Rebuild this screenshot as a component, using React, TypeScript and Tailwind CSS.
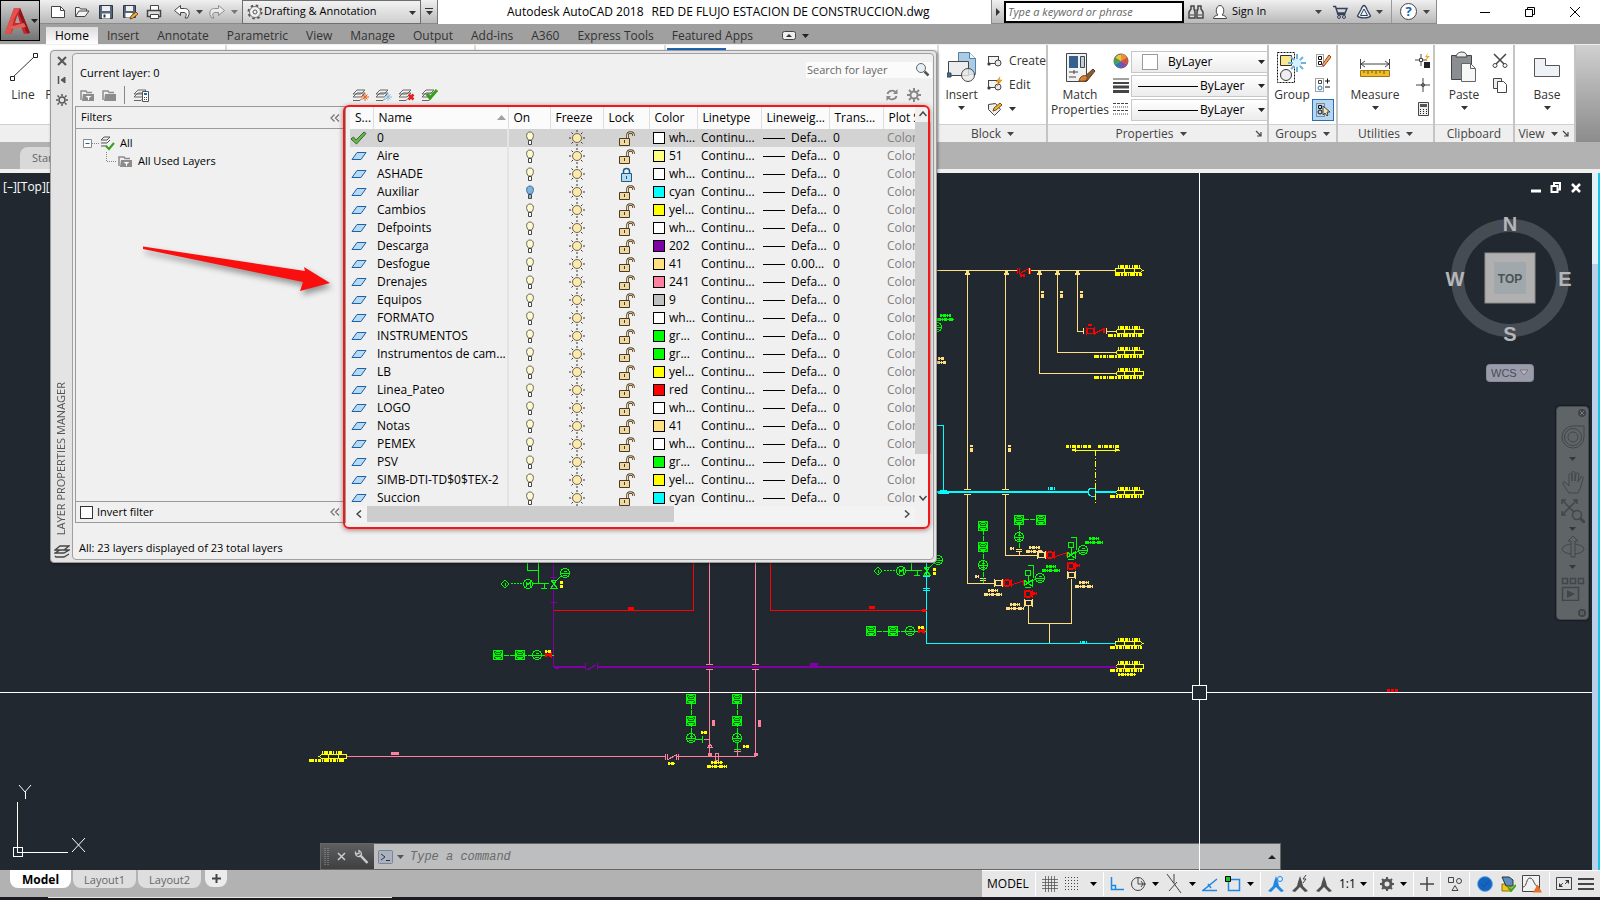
import React from 'react';

type Kids = { children?: React.ReactNode };

function Ico({ w = 16, h = 16, className = '', children }: Kids & { w?: number; h?: number; className?: string }) {
  return (
    <svg width={w} height={h} viewBox={`0 0 ${w} ${h}`} className={`shrink-0 ${className}`} fill="none" stroke="#454545" aria-hidden="true">
      {children}
    </svg>
  );
}

function Caret({ className = '' }: { className?: string }) {
  return (
    <svg width="7" height="4" viewBox="0 0 7 4" className={`shrink-0 ${className}`} aria-hidden="true">
      <path d="M0 0h7L3.500 4z" fill="currentColor" />
    </svg>
  );
}

/* ---------- title bar ---------- */

function QuickAccess() {
  return (
    <div className="flex h-6 items-center border-b border-[#8a8a8a] bg-linear-to-b from-[#f0f0f0] to-[#b9b9b9] pl-2.5">
      <div className="flex items-center gap-2">
        <button aria-label="New"><Ico><path d="M1.500 2.500h9l4 4v7h-13z" fill="#fff" /><path d="M10.500 2.500v4h4" /></Ico></button>
        <button aria-label="Open"><Ico><path d="M1.500 12.500v-9h4l1 1.500h6v2M1.500 12.500l3.500-5.500h10l-4 5.500z" fill="#f4f4f4" /></Ico></button>
        <button aria-label="Save"><Ico><path d="M1.500 1.500h13v13h-13z" fill="#56657c" stroke="#2e3848" /><path d="M4 2h8v5H4z" fill="#eee" stroke="none" /><path d="M4 9.500h8v5H4z" fill="#fff" stroke="none" /><path d="M5.500 10.500h2v3h-2z" fill="#333" stroke="none" /></Ico></button>
        <button aria-label="Save As"><Ico><path d="M1.500 1.500h12v12h-12z" fill="#56657c" stroke="#2e3848" /><path d="M4 2h7v5H4z" fill="#eee" stroke="none" /><path d="M3.500 9h7v4.500h-7z" fill="#fff" stroke="none" /><path d="M8 15l1-3 5-4 2 2-5 4z" fill="#f0b63c" stroke="#7a4a15" /></Ico></button>
        <button aria-label="Plot"><Ico><path d="M4.500 6V1.500h8V6" fill="#fff" /><path d="M1.500 6.500h13v6h-13z" fill="#ddd" strokeWidth="1.500" /><path d="M4.500 10.500h8v4h-8z" fill="#fff" /></Ico></button>
        <button aria-label="Undo" className="ml-1"><Ico><path d="M.500 6.500l6-5v3h4c3.500 0 5 2 4.500 6l-1.500 3.500h-2.500c2-3 1.500-5.500-1-5.500H6.500v3z" fill="#fff" /></Ico></button>
      </div>
      <Caret className="ml-1.5 text-[#444]" />
      <button aria-label="Redo" className="ml-1.5"><Ico className="opacity-50"><path d="M15.500 6.500l-6-5v3h-4c-3.500 0-5 2-4.500 6l1.500 3.500H5c-2-3-1.500-5.500 1-5.500h3.500v3z" fill="#fff" /></Ico></button>
      <Caret className="ml-1.5 text-[#777]" />
      <label className="relative ml-1 flex h-6 w-[179px] items-center border border-[#6f6f6f] bg-linear-to-b from-[#f2f2f2] to-[#cfcfcf]">
        <GearIcon className="absolute left-1 top-[3px]" />
        <select aria-label="Workspace" className="h-full w-full appearance-none bg-transparent pl-[21px] text-[11px] outline-none"><option>Drafting &amp; Annotation</option></select>
        <Caret className="absolute right-1 top-2.5 text-[#333]" />
      </label>
      <button aria-label="Customize toolbar" className="flex h-6 w-[17px] flex-col items-center justify-center gap-0.5 border-r border-[#777]">
        <span className="h-px w-2 bg-[#333]" /><Caret className="text-[#333]" />
      </button>
    </div>
  );
}

function GearIcon({ className = '' }: { className?: string }) {
  return (
    <Ico className={className}>
      <g stroke="#555">
        <circle cx="8" cy="8" r="6.500" strokeDasharray="2.500 2.600" strokeWidth="2" />
        <circle cx="8" cy="8" r="5.500" fill="#f2f2f2" stroke="#777" />
        <circle cx="8" cy="8" r="2" fill="#f2f2f2" />
      </g>
    </Ico>
  );
}

function TitleBar() {
  return (
    <div className="flex h-6 items-start bg-white">
      <QuickAccess />
      <h1 className="flex h-6 flex-1 items-center gap-2 overflow-hidden whitespace-nowrap pl-[69px] text-xs">
        <span>Autodesk AutoCAD 2018</span><span>RED DE FLUJO ESTACION DE CONSTRUCCION.dwg</span>
      </h1>
      <div className="flex h-6 w-[446px] items-center border border-t-0 border-[#8a8a8a] bg-linear-to-b from-[#f0f0f0] to-[#b9b9b9]">
        <button aria-label="Toggle search" className="flex w-3 justify-center"><Ico w={5} h={8}><path d="M0 0l4 4-4 4z" fill="#333" stroke="none" /></Ico></button>
        <input aria-label="Search" placeholder="Type a keyword or phrase" className="h-[22px] w-[180px] border-2 border-black bg-white px-0.5 text-[11px] italic outline-none placeholder:text-[#666]" />
        <button aria-label="Find" className="ml-1"><Ico><path d="M3 2h3v3l1 3v6H1V8l2-3zM10 2h3v3l2 3v6H9V8l1-3z" fill="#ddd" strokeWidth="1.500" /><path d="M6 6h4M2 11h4M10 11h4" /></Ico></button>
        <button className="ml-2 flex items-center gap-1 whitespace-nowrap text-[11px]"><Ico><path d="M1.500 14.500c0-2 2-3 4.500-3.500-3-2-2-9.500 2-9.500s5 7.500 2 9.500c2.500.5 4.500 1.500 4.500 3.500z" fill="#fff" /></Ico>Sign In</button>
        <Caret className="ml-auto text-[#444]" />
        <button aria-label="App Store" className="ml-2.5"><Ico><path d="M1 2.500h2.500L6 10.500h7.500M4 4.500h11l-2 4.500H5.500" stroke="#34435c" strokeWidth="1.500" /><circle cx="7" cy="13" r="1.500" stroke="#34435c" /><circle cx="12" cy="13" r="1.500" stroke="#34435c" /></Ico></button>
        <button aria-label="Stay connected" className="ml-2"><Ico><path d="M8 1.500c-1.500 0-2 1.500-3 4L1.500 12c2 2.500 11 2.500 13 0L11 5.500c-1-2.500-1.500-4-3-4z" stroke="#34435c" strokeWidth="1.300" fill="#eef1f6" /><path d="M4.500 11.500L8 5l3.500 6.500z" stroke="#34435c" /></Ico></button>
        <Caret className="ml-1 text-[#444]" />
        <span className="ml-2 h-full w-px bg-[#999]" />
        <button aria-label="Help" className="ml-2 flex size-[17px] items-center justify-center rounded-full border border-[#444] bg-white text-[13px] font-bold leading-none text-[#1660b0]">?</button>
        <Caret className="mx-1.5 text-[#444]" />
      </div>
      <div className="flex h-6 w-[163px] items-center justify-end gap-[29px] pr-[17px]">
        <button aria-label="Minimize"><Ico><path d="M3 8.500h10" stroke="#000" /></Ico></button>
        <button aria-label="Restore"><Ico><path d="M3.500 5.500h7v7h-7zM5.500 5.500v-2h7v7h-2" stroke="#000" /></Ico></button>
        <button aria-label="Close"><Ico><path d="M3 3l10 10M13 3L3 13" stroke="#000" /></Ico></button>
      </div>
    </div>
  );
}

const ribbonTabs = ['Home', 'Insert', 'Annotate', 'Parametric', 'View', 'Manage', 'Output', 'Add-ins', 'A360', 'Express Tools', 'Featured Apps'];

function Header() {
  return (
    <header className="flex bg-[#a0a0a0]">
      <button aria-label="Application menu" className="flex h-[41px] w-10 items-center border border-black bg-linear-to-b from-[#d0d0d0] to-[#747474] pl-1">
        <Ico w={26} h={30}>
          <path d="M0 27L9 2h6l10 25-6 1-3-7H9l-3 7z" fill="#c5282d" stroke="none" />
          <path d="M10 17l2.500-8 2.500 8z" fill="#a5a5a5" stroke="none" />
          <path d="M9 2h6l-6 11-3 15-6-1z" fill="#e2524c" stroke="none" />
          <path d="M15 2l10 25-3 .5-8-19z" fill="#8f171c" stroke="none" />
          <path d="M4 21l15-4 2 4-13 2z" fill="#e4615a" stroke="none" />
        </Ico>
        <Caret className="text-[#222]" />
      </button>
      <div className="min-w-0 flex-1">
        <TitleBar />
        <nav className="flex h-5 items-end whitespace-nowrap pl-[6px] text-xs text-[#333]">
          {ribbonTabs.map((t, i) => (
            <button key={t} className={i === 0 ? 'h-[17px] bg-linear-to-b from-[#dcdcdc] to-white px-[9px] leading-4 text-black' : 'h-[17px] px-[9px] leading-4'}>{t}</button>
          ))}
          <button aria-label="Ribbon display" className="ml-5 flex h-[17px] items-center gap-1.5"><Ico w={14} h={9}><rect x=".5" y=".5" width="13" height="8" rx="2" fill="#eee" /><path d="M4 6l3-3 3 3z" fill="#333" stroke="none" /></Ico><Caret className="text-[#222]" /></button>
        </nav>
      </div>
    </header>
  );
}

/* ---------- ribbon ---------- */

function Panel({ title, w, caret = true, launcher = false, children }: Kids & { title: string; w: string; caret?: boolean; launcher?: boolean }) {
  return (
    <section className={`flex shrink-0 flex-col border-r-2 border-[#c4c4c4] bg-white ${w}`}>
      <div className="flex flex-1 items-start pl-[5px] pt-1.5">{children}</div>
      <div className="flex h-[18px] items-center border-t border-[#d0d0d0] bg-[#efefef] text-xs text-[#444]">
        <div className="flex flex-1 items-center justify-center gap-1.5"><h2>{title}</h2>{caret && <Caret />}</div>
        {launcher && <Ico w={9} h={9} className="mr-1"><path d="M2 2l5 5M7 3v4H3" strokeWidth="1.200" /></Ico>}
      </div>
    </section>
  );
}

function Big({ label, icon, caret = true, w = 'w-12' }: { label: string; icon: React.ReactNode; caret?: boolean; w?: string }) {
  return (
    <button className={`flex flex-col items-center text-xs leading-[15px] text-[#333] ${w}`}>
      <span className="flex h-9 items-start">{icon}</span>
      <span>{label}</span>
      {caret && <Caret className="mt-1" />}
    </button>
  );
}

const pill = (
  <g><rect x="1.500" y="3.500" width="10" height="7" fill="#f5f5f5" /><circle cx="11" cy="10" r="3" fill="#e8e8e8" /><path d="M1 10h2v2H1z" fill="#333" /></g>
);

function PropSelect({ label, kind }: { label: string; kind: 'swatch' | 'line' }) {
  return (
    <span className="relative flex h-[22px] w-[137px] items-center border border-[#c8c8c8] bg-linear-to-b from-white to-[#ececec]">
      {kind === 'swatch' ? <span className="absolute left-2.5 top-[2px] h-4 w-4 border border-[#999] bg-white" /> : <span className="absolute left-1.5 top-2.5 h-px w-[60px] bg-black" />}
      <select aria-label={label} className={`h-full w-full appearance-none bg-transparent text-xs outline-none ${kind === 'swatch' ? 'pl-9' : 'pl-[68px]'}`}><option>ByLayer</option></select>
      <Caret className="absolute right-0.5 top-2 text-[#222]" />
    </span>
  );
}

function Ribbon() {
  return (
    <div className="flex h-[98px] border-t border-[#eee] bg-white">
      <section className="flex w-[227px] flex-col border-r-2 border-[#ddd]">
        <div className="flex flex-1 pl-[7px] pt-1.5">
          <Big label="Line" caret={false} w="w-8" icon={<Ico w={30} h={32}><path d="M4 27L27 5" stroke="#333" /><path d="M2.500 25.500h4v4h-4zM25.500 2.500h4v4h-4z" fill="#fff" stroke="#222" /></Ico>} />
          <Big label="Polyline" w="w-14" icon={<Ico w={30} h={32}><path d="M4 27V12l22-6" /></Ico>} />
        </div>
        <div className="h-[18px] border-t border-[#d0d0d0] bg-[#efefef]" />
      </section>
      <div className="w-[249px] border-r-2 border-[#ddd]" />
      <div className="w-[190px] border-r-2 border-[#ddd]" />
      <div className="flex-1 border-r-2 border-[#ddd] pl-[1px] pt-[3px]"><div className="h-0.5 w-[59px] bg-[#2065b5]" /></div>
      <Panel title="Block" w="w-[109px]">
        <Big label="Insert" w="w-10" icon={<Ico w={30} h={32}><path d="M11.500 1.500h11l6 6v16h-17z" fill="#a9cbe6" stroke="#5b7f9e" /><path d="M22.500 1.500v6h6" fill="#eef6fc" stroke="#5b7f9e" /><path d="M1.500 10.500h20v14h-20z" fill="#ececec" /><circle cx="21" cy="24" r="6.500" fill="#e8e8e8" fillOpacity=".8" /><path d="M0 22h4v4H0z" fill="#2f6ea8" /></Ico>} />
        <div className="flex flex-col gap-2 pl-2 pt-0.5 text-xs leading-4 text-[#333]">
          <button className="flex items-center gap-1.5"><Ico>{pill}</Ico>Create</button>
          <button className="flex items-center gap-1.5"><Ico>{pill}<path d="M13 0L9 5h3l-2 4 5-6h-3z" fill="#f5a623" stroke="#c07a10" strokeWidth=".5" /></Ico>Edit</button>
          <button aria-label="Attributes" className="flex items-center gap-1.5"><Ico><path d="M1.500 3.500l7-1 5 6-6 6-6-6z" fill="#eee" /><path d="M6 10l1-3 6-5 2 2-6 5z" fill="#f0b63c" stroke="#7a4a15" /></Ico><Caret /></button>
        </div>
      </Panel>
      <Panel title="Properties" w="w-[221px]" launcher>
        <button className="flex w-[54px] flex-col items-center text-xs leading-[15px] text-[#333]">
          <span className="flex h-9"><Ico w={32} h={33}><path d="M2.500 2.500h20v28h-20z" fill="#f2f2f2" /><path d="M5 5h9v12H5z" fill="#33608c" stroke="none" /><path d="M16.500 5.500h4v11h-4z" fill="#b9d2e6" /><path d="M5 21h9M5 26h7M10 19v4" /><path d="M19 27l10-9 2 2-8 10z" fill="#8a5a30" stroke="#5c3a1c" /><path d="M15 30c1-5 4-6 8-5 1 4-2 6-8 5z" fill="#d38137" stroke="#7b4515" /></Ico></span>
          <span>Match Properties</span>
        </button>
        <div className="flex flex-col gap-2 pl-1.5 pt-0.5">
          <Ico><circle cx="8" cy="8" r="7" fill="#f3c53a" stroke="#555" /><path d="M8 8V1a7 7 0 0 1 6 3.500z" fill="#e98f3b" stroke="none" /><path d="M8 8l6-3.500a7 7 0 0 1 0 7z" fill="#d84d3f" stroke="none" /><path d="M8 8l6 3.500A7 7 0 0 1 8 15z" fill="#8b49a8" stroke="none" /><path d="M8 8v7a7 7 0 0 1-6-3.500z" fill="#3474bd" stroke="none" /><path d="M8 8l-6 3.500a7 7 0 0 1 0-7z" fill="#46a153" stroke="none" /></Ico>
          <Ico><path d="M0 2h16" strokeWidth="1" /><path d="M0 6h16" strokeWidth="2" /><path d="M0 10h16M0 14.500h16" strokeWidth="3" /></Ico>
          <Ico><path d="M0 2.500h16M0 9.500h16" strokeDasharray="3 1" /><path d="M0 6h16M0 13h16" strokeDasharray="1 1" /></Ico>
        </div>
        <div className="flex flex-col gap-0.5 pl-0.5"><PropSelect label="Object color" kind="swatch" /><PropSelect label="Lineweight" kind="line" /><PropSelect label="Linetype" kind="line" /></div>
      </Panel>
      <Panel title="Groups" w="w-[69px]">
        <Big label="Group" caret={false} w="w-9" icon={<Ico w={32} h={34}><path d="M1.500 1.500h17v30h-17z" strokeDasharray="2 1" stroke="#111" /><path d="M4.500 4.500h11v10h-11z" fill="#f7e78e" stroke="#333" /><circle cx="10" cy="24" r="5.500" fill="#eee" stroke="#333" /><path d="M21 3v18M12 12h18M15 6l12 12M27 6L15 18" stroke="#6bb5e0" strokeWidth="2" /><circle cx="21" cy="12" r="4" fill="#d9f1ff" stroke="none" /></Ico>} />
        <div className="flex flex-col items-center gap-1 pl-0.5">
          <button aria-label="Ungroup" className="p-0.5"><Ico><path d="M1.500 1.500h7v12h-7z" strokeDasharray="1 1" /><path d="M3.500 3.500h3v3h-3zM3.500 8.500h3v3h-3z" stroke="#111" /><path d="M7 12l7-10 2 2-7 9z" fill="#e8b14a" stroke="#a33" /></Ico></button>
          <button aria-label="Group edit" className="p-0.5"><Ico><path d="M.500 1.500h8v13h-8z" strokeDasharray="1 1" /><path d="M3.500 3.500h3v3h-3z" /><circle cx="5" cy="11" r="2" stroke="#2475c0" /><path d="M10 4h5M12.500 1.500v5M10 10h5" stroke="#111" /></Ico></button>
          <button aria-label="Group selection" className="border border-[#2c6fb0] bg-[#b5d5f0] p-0.5"><Ico><path d="M1.500 1.500h8v13h-8z" strokeDasharray="1 1" /><path d="M3.500 3.500h3v3h-3z" stroke="#111" /><circle cx="5" cy="10" r="2" stroke="#111" /><path d="M8 4v9l2-2 2 3 1-1-1-3h3z" fill="#f5e5b0" stroke="#444" /></Ico></button>
        </div>
      </Panel>
      <Panel title="Utilities" w="w-[97px]">
        <Big label="Measure" w="w-16" icon={<Ico w={32} h={32}><path d="M1.500 8v10M30.500 8v10M2 13h28M6 10l-4 3 4 3M26 10l4 3-4 3" /><path d="M1.500 19.500h29v6h-29z" fill="#f0bc28" stroke="#9c7614" /><path d="M5 20v2M9 20v3M13 20v2M17 20v3M21 20v2M25 20v3" stroke="#6c500a" /></Ico>} />
        <div className="flex flex-col gap-2 pl-2 pt-0.5">
          <button aria-label="Quick select"><Ico><path d="M6 1v12M0 7h12" /><path d="M4.500 5.500h3v3h-3z" fill="#fff" /><path d="M13 0L10 4h2l-2 4 5-5h-3z" fill="#f5a623" stroke="none" /><path d="M9 9h6v6H9z" fill="#222" stroke="none" /></Ico></button>
          <button aria-label="ID point"><Ico><path d="M8 1v14M1 8h14" /><circle cx="8" cy="8" r="1.500" fill="#777" /></Ico></button>
          <button aria-label="Calculator"><Ico><path d="M3.500 1.500h10v13h-10z" fill="#eee" /><path d="M5 3h7v3H5z" fill="#555" stroke="none" /><path d="M5 8.500h7M5 10.500h7M5 12.500h7" strokeDasharray="1 2" stroke="#222" /></Ico></button>
        </div>
      </Panel>
      <Panel title="Clipboard" w="w-20" caret={false}>
        <Big label="Paste" w="w-12" icon={<Ico w={28} h={33}><path d="M1.500 4.500h20v24h-20z" fill="#8a8e93" stroke="#444" /><path d="M6 6c0-3 3-5 6-5s5 2 5 5z" fill="#eee" /><path d="M11.500 12.500h9l5 5v13h-14z" fill="#f7f7f7" stroke="#666" /><path d="M20.500 12.500v5h5" stroke="#666" /></Ico>} />
        <div className="flex flex-col gap-2 pl-1 pt-0.5">
          <button aria-label="Cut"><Ico><path d="M2 1l10 10M14 1L4 11" strokeWidth="1.500" /><circle cx="3" cy="12.500" r="2" /><circle cx="13" cy="12.500" r="2" /></Ico></button>
          <button aria-label="Copy"><Ico><path d="M1.500 1.500h8v10h-8z" fill="#eee" /><path d="M5.500 4.500h6l3 3v8h-9z" fill="#fff" /></Ico></button>
        </div>
      </Panel>
      <Panel title="View" w="w-[61px]" launcher>
        <Big label="Base" w="w-[54px]" icon={<Ico w={28} h={32}><path d="M1.500 7.500h11v7h14v11h-25z" fill="#eef1f5" stroke="#555" /></Ico>} />
      </Panel>
      <div className="w-6 bg-linear-to-b from-[#d0d0d0] to-[#8c8c8c]" />
    </div>
  );
}

/* ---------- layer palette ---------- */

type Layer = [string, string, string, string?];
const W = '#ffffff';
const layers: Layer[] = [
  ['0', W, 'wh...'], ['Aire', '#ffff7f', '51'], ['ASHADE', W, 'wh...'], ['Auxiliar', '#00ffff', 'cyan'], ['Cambios', '#ffff00', 'yel...'],
  ['Defpoints', W, 'wh...'], ['Descarga', '#7f00a5', '202'], ['Desfogue', '#ffdf7f', '41', '0.00...'], ['Drenajes', '#ff7f9f', '241'], ['Equipos', '#c0c0c0', '9'],
  ['FORMATO', W, 'wh...'], ['INSTRUMENTOS', '#00ff00', 'gr...'], ['Instrumentos de cam...', '#00ff00', 'gr...'], ['LB', '#ffff00', 'yel...'], ['Linea_Pateo', '#ff0000', 'red'],
  ['LOGO', W, 'wh...'], ['Notas', '#ffdf7f', '41'], ['PEMEX', W, 'wh...'], ['PSV', '#00ff00', 'gr...'], ['SIMB-DTI-TD$0$TEX-2', '#ffff00', 'yel...'], ['Succion', '#00ffff', 'cyan'],
];

const Sheet = () => <Ico w={17} h={10}><path d="M2 8.500L7 1.500h9l-5 7z" fill="#b5daf2" stroke="#1d5fa8" /></Ico>;
const Check = () => <Ico w={17} h={14}><path d="M1 8l2.500-2L6 9l8-8 2 1.500L6.500 13z" fill="#6fb253" stroke="#2b6e22" /></Ico>;
const Bulb = ({ off }: { off: boolean }) => (
  <Ico w={10} h={15} className="mx-auto"><path d="M3.500 9C1 7 .5 1 5 1s4 6 1.500 8z" fill={off ? '#7db3dd' : '#fffbd0'} stroke={off ? '#3c6f9c' : '#6b6650'} /><path d="M3.500 9.500h3v4h-3z" fill={off ? '#9db8cc' : '#fff'} stroke="#444" /></Ico>
);
const Sun = () => <Ico w={16} h={16} className="mx-auto"><path d="M8 0v2M8 14v2M0 8h2M14 8h2M2.500 2.500l1.500 1.500M12 12l1.500 1.500M13.500 2.500L12 4M4 12l-1.500 1.500" stroke="#333" /><circle cx="8" cy="8" r="4.500" fill="#fde9ae" stroke="#6d6248" /></Ico>;
const Lock = ({ closed }: { closed: boolean }) => closed ? (
  <Ico w={18} h={15} className="mx-auto"><path d="M6.500 6V4c0-3.500 6-3.500 6 0v2" stroke="#1f5b85" strokeWidth="1.500" /><path d="M4.500 6.500h10v8h-10z" fill="#b6dcf4" stroke="#1f5b85" /><path d="M9.500 9v3" stroke="#1f5b85" /></Ico>
) : (
  <Ico w={18} h={15} className="mx-auto"><path d="M10.500 7V4c0-3.500 6-3.500 6 0v1" stroke="#4b3a22" strokeWidth="2.500" /><path d="M10.500 7V4c0-3.500 6-3.500 6 0v1" stroke="#f2dcae" /><path d="M2.500 7.500h10v7h-10z" fill="#f0d8a4" stroke="#4b3a22" /><path d="M7.500 9v3" stroke="#4b3a22" /></Ico>
);

const heads = ['S...', 'Name', 'On', 'Freeze', 'Lock', 'Color', 'Linetype', 'Lineweig...', 'Trans...', 'Plot S...'];

function LayerTable() {
  return (
    <div className="flex h-[416px] w-[581px] flex-col">
      <div className="flex min-h-0 flex-1">
        <div className="min-w-0 flex-1 overflow-hidden">
          <table className="w-[597px] table-fixed border-collapse whitespace-nowrap text-left text-xs">
            <colgroup>
              <col className="w-[23px]" /><col className="w-[135px]" /><col className="w-[42px]" /><col className="w-[53px]" /><col className="w-[46px]" /><col className="w-12" /><col className="w-16" /><col className="w-[68px]" /><col className="w-[54px]" /><col className="w-16" />
            </colgroup>
            <thead>
              <tr className="h-[23px] bg-[#fbfbfb]">
                {heads.map((h, i) => (
                  <th key={h} className="overflow-hidden border-r border-[#dedede] p-0 pl-[5px] font-normal">
                    {i === 1 ? <span className="flex items-center justify-between pr-0.5">{h}<Ico w={9} h={5}><path d="M0 5l4.500-5L9 5z" fill="#a0a0a0" stroke="none" /></Ico></span> : h}
                  </th>
                ))}
              </tr>
            </thead>
            <tbody>
              {layers.map(([name, color, label, lw], i) => (
                <tr key={name} className={i === 0 ? 'h-[18px] bg-[#d3d3d3] leading-[18px]' : 'h-[18px] leading-[18px]'}>
                  <td className="p-0">{i === 0 ? <Check /> : <Sheet />}</td>
                  <td className="overflow-hidden border-r-2 border-[#e4e4e4] p-0 pl-1">{name}</td>
                  <td className="p-0"><Bulb off={name === 'Auxiliar'} /></td>
                  <td className="p-0"><Sun /></td>
                  <td className="p-0"><Lock closed={name === 'ASHADE'} /></td>
                  <td className="overflow-hidden p-0 pl-1"><span className="flex items-center gap-1"><span className="size-3 shrink-0 border border-black" style={{ backgroundColor: color }} />{label}</span></td>
                  <td className="overflow-hidden p-0 pl-1">Continu...</td>
                  <td className="overflow-hidden p-0 pl-0.5"><span className="flex items-center gap-1.5"><span className="h-px w-[22px] bg-black" />{lw ?? 'Defa...'}</span></td>
                  <td className="p-0 pl-1">0</td>
                  <td className="overflow-hidden p-0 pl-1 text-[#808080]">Color</td>
                </tr>
              ))}
            </tbody>
          </table>
        </div>
        <div className="flex w-4 flex-col items-center justify-between bg-[#f0f0f0]">
          <div className="flex h-4 items-center"><Ico w={8} h={6}><path d="M.500 5L4 1l3.500 4" strokeWidth="1.500" /></Ico></div>
          <div className="h-[332px] w-4 bg-[#cdcdcd]" />
          <div className="mt-auto flex h-4 items-center"><Ico w={8} h={6}><path d="M.500 1L4 5l3.500-4" strokeWidth="1.500" /></Ico></div>
        </div>
      </div>
      <div className="flex h-4 w-[565px] items-center bg-[#f3f3f3]">
        <span className="flex w-[17px] justify-center"><Ico w={6} h={8}><path d="M5 .500L1 4l4 3.500" strokeWidth="1.500" /></Ico></span>
        <span className="h-4 w-[307px] bg-[#cdcdcd]" />
        <span className="ml-auto flex w-[17px] justify-center"><Ico w={6} h={8}><path d="M1 .500L5 4 1 7.500" strokeWidth="1.500" /></Ico></span>
      </div>
    </div>
  );
}

const Stack = ({ extra }: { extra?: React.ReactNode }) => (
  <Ico w={18} h={14}><path d="M1 9l4-4h8l-4 4zM1 12.500h7l2-2M1 6l4-4h8l-4 4z" stroke="#666" />{extra}</Ico>
);
const Folder = ({ t = false }: { t?: boolean }) => (
  <Ico w={14} h={13}><path d="M1 11V2h5l1 1.500h5" stroke="#8c8c8c" strokeWidth="1.500" /><path d="M3 5h11v7H2z" fill="#8c8c8c" stroke="none" />{t && <path d="M5.500 7h6L9 9v2H8V9z" fill="#fff" stroke="none" />}</Ico>
);
const Collapse = () => <button aria-label="Collapse"><Ico w={10} h={8}><path d="M4.500.5L1 4l3.500 3.500M9 .5L5.500 4 9 7.500" stroke="#777" strokeWidth="1.300" /></Ico></button>;

function LayerPalette() {
  return (
    <aside className="absolute left-[50px] top-[50px] flex h-[513px] w-[887px] rounded border border-[#9a9a9a] bg-[#e4e4e4] text-[11px] text-black shadow-[1px_1px_3px_rgba(0,0,0,0.4)]">
      <div className="flex w-[21px] flex-col items-center gap-[9px] pb-1 pt-[5px]">
        <button aria-label="Close palette"><Ico w={10} h={10}><path d="M1 1l8 8M9 1L1 9" strokeWidth="2" stroke="#555" /></Ico></button>
        <button aria-label="Auto-hide"><Ico w={10} h={10}><path d="M1.500 1v8" stroke="#555" strokeWidth="1.500" /><path d="M8 2L4 5l4 3z" fill="#555" stroke="#555" /></Ico></button>
        <button aria-label="Palette options"><Ico w={12} h={12}><circle cx="6" cy="6" r="3" strokeWidth="1.500" stroke="#555" /><path d="M6 0v2M6 10v2M0 6h2M10 6h2M1.500 1.500L3 3M9 9l1.500 1.500M10.500 1.500L9 3M3 9l-1.500 1.500" strokeWidth="1.500" stroke="#555" /></Ico></button>
        <h2 className="mt-auto rotate-180 whitespace-nowrap text-[11px] text-[#555] [writing-mode:vertical-rl]">LAYER PROPERTIES MANAGER</h2>
        <Ico w={16} h={14}><path d="M1 9l5-3h9l-5 3zM1 12l1 1h8l5-3M1 6l5-4h9l-5 4z" stroke="#444" strokeWidth="1.300" /></Ico>
      </div>
      <div className="mb-0.5 mr-0.5 mt-0.5 flex min-w-0 flex-1 flex-col rounded border border-[#a0a0a0] bg-[#f0f0f0]">
        <div className="flex h-[30px] items-end justify-between pl-[7px] pr-px">
          <p className="pb-[3px] leading-4">Current layer: 0</p>
          <label className="mb-1.5 flex h-4 w-[126px] items-center bg-[#fbfbfb]">
            <input aria-label="Search for layer" placeholder="Search for layer" className="w-[108px] bg-transparent pl-px outline-none placeholder:text-[#666]" />
            <Ico><circle cx="7" cy="6" r="4.500" fill="#e4eff7" stroke="#666" /><path d="M10.500 9.500l4 4" strokeWidth="2.500" stroke="#555" /></Ico>
          </label>
        </div>
        <div className="flex h-[22px] items-center pl-[7px] pr-3">
          <div className="flex w-[272px] items-center gap-2">
            <button aria-label="New property filter"><Folder t /></button>
            <button aria-label="New group filter"><Folder /></button>
            <span className="h-[18px] w-px bg-[#888]" />
            <button aria-label="Layer states manager"><Stack extra={<g><path d="M9.500 3.500h6v10h-6z" fill="#fff" stroke="#555" /><path d="M11 5h3v2h-3z" fill="#1d68b8" stroke="none" /><path d="M11 9.500h3M11 11.500h3" strokeDasharray="1" /></g>} /></button>
          </div>
          <div className="flex flex-1 items-center gap-[5px]">
            <button aria-label="New layer"><Stack extra={<path d="M13 5v8M9 9h8M10.500 6.500l5 5M15.500 6.500l-5 5" stroke="#e8601c" />} /></button>
            <button aria-label="New frozen layer"><Stack extra={<path d="M13 5v8M9 9h8M10.500 6.500l5 5M15.500 6.500l-5 5" stroke="#85bfe2" />} /></button>
            <button aria-label="Delete layer"><Stack extra={<path d="M10.500 6.500l5 5M15.500 6.500l-5 5" stroke="#e0201c" strokeWidth="2.500" />} /></button>
            <button aria-label="Set current"><Stack extra={<path d="M6 6l3 4 7-8" stroke="#36a018" strokeWidth="3" />} /></button>
          </div>
          <button aria-label="Refresh" className="mr-[9px]"><Ico w={12} h={12}><path d="M1.500 5C2 2 7 0 10 3.500M10.500 7C10 10 5 12 2 8.500" stroke="#888" strokeWidth="1.800" /><path d="M11.500 0v5H7zM.500 12V7H5z" fill="#888" stroke="none" /></Ico></button>
          <button aria-label="Settings"><Ico w={14} h={14}><circle cx="7" cy="7" r="3.500" stroke="#888" strokeWidth="2" /><path d="M7 0v3M7 11v3M0 7h3M11 7h3M2 2l2 2M10 10l2 2M12 2l-2 2M4 10l-2 2" stroke="#888" strokeWidth="2" /></Ico></button>
        </div>
        <div className="flex h-[417px] pl-0.5">
          <div className="flex w-[271px] flex-col border border-[#9a9a9a]">
            <div className="flex h-[22px] items-center justify-between border-b border-[#9a9a9a] pl-[5px] pr-[5px]"><h3>Filters</h3><Collapse /></div>
            <ul className="flex-1 pl-[7px] pt-[5px] leading-[18px]">
              <li className="flex h-[18px] items-center">
                <Ico w={17} h={9}><path d="M.500.5h8v8h-8z" fill="#fff" stroke="#888" /><path d="M2.500 4.500h4" stroke="#2160a0" /><path d="M9 4.500h7" strokeDasharray="1" stroke="#888" /></Ico>
                <Ico w={15} h={15}><path d="M1 4l3-3h6L7 4zM1 7h6l3-3M1 10h6" stroke="#555" /><path d="M6 10l3 3 5-6" stroke="#36a018" strokeWidth="2" /></Ico>
                <span className="ml-[5px]">All</span>
              </li>
              <li className="flex h-[18px] items-center pl-[22px]">
                <Ico w={13} h={18}><path d="M1.500 0v9.500H12" strokeDasharray="1" stroke="#888" /></Ico><Folder t /><span className="ml-1.5">All Used Layers</span>
              </li>
            </ul>
            <div className="flex h-[21px] items-center justify-between border-t border-[#9a9a9a] pl-1 pr-[5px]">
              <label className="flex items-center gap-1"><input type="checkbox" className="size-[13px] appearance-none border border-[#333] bg-white" />Invert filter</label><Collapse />
            </div>
          </div>
          <div className="pl-1"><LayerTable /></div>
        </div>
        <p className="pl-1.5 pt-[17px]">All: 23 layers displayed of 23 total layers</p>
      </div>
    </aside>
  );
}

function Callout() {
  return (
    <>
      <div className="pointer-events-none absolute left-[343px] top-[105px] h-[424px] w-[587px] rounded-md border-2 border-[#f01818] shadow-[0_1px_5px_rgba(80,0,0,0.5)]" />
      <svg className="pointer-events-none absolute left-[136px] top-[236px] drop-shadow-[2px_4px_3px_rgba(0,0,0,0.4)]" width="200" height="64" viewBox="136 236 200 64" aria-hidden="true">
        <path d="M143 246.500L305 271l-1-4 26 16-30 8 3-9L143 249z" fill="#fa0f0f" />
      </svg>
    </>
  );
}

/* ---------- drawing ---------- */

const G = '#00ff00', Y = '#ffff00', T = '#ffdf7f', R = '#ff0000', C = '#00ffff', P = '#7f00a5', K = '#ff7f9f';

const Box = ({ x, y }: { x: number; y: number }) => <g stroke={G}><rect x={x - 4.5} y={y - 4.5} width="9" height="9" fill="#0a5c15" /><circle cx={x} cy={y} r="3.500" /><path d={`M${x - 4} ${y}h8M${x - 2} ${y - 2}h4M${x - 2} ${y + 2}h4`} /></g>;
const Dot = ({ x, y }: { x: number; y: number }) => <g stroke={G}><circle cx={x} cy={y} r="4.500" /><path d={`M${x - 4} ${y}h8M${x - 2} ${y + 2}h4M${x - 1} ${y - 2}h3`} /></g>;
const Note = ({ x, y, w, c, rows = 2 }: { x: number; y: number; w: number; c: string; rows?: number }) => (
  <g stroke={c}>
    <path d={`M${x + (rows > 1 ? w / 5 : 0)} ${y}h${rows > 1 ? w * 0.6 : w}`} strokeWidth="3" strokeDasharray="2 1 3 1 1 1" />
    <path d={`M${x + (rows > 1 ? w / 5 : 0)} ${y + .5}h${rows > 1 ? w * 0.6 : w}`} />
    {rows > 1 && <><path d={`M${x} ${y + 4}h${w}`} strokeWidth="3" strokeDasharray="4 1 1 1 3 2" /><path d={`M${x} ${y + 4.5}h${w}`} /></>}
  </g>
);
const Tag = ({ x, y, w = 28, lead = 0, flip = false }: { x: number; y: number; w?: number; lead?: number; flip?: boolean }) => (
  <g stroke={Y}>
    <path d={flip ? `M${x} ${y - 1.5}h${w - 3}l3 2-3 2h-${w - 3}z` : `M${x + w} ${y - 1.5}h-${w - 3}l-3 2 3 2h${w - 3}z`} />
    <path d={`M${x + 9} ${y - 2}v4M${x + 19} ${y - 2}v4`} />
    <path d={`M${x + 3} ${y - 3.5}h${w - 6}`} strokeWidth="3" strokeDasharray="1 1 4 1 3 1 1 2" />
    <path d={`M${x - lead} ${y + 4.5}h${w + lead - 1}`} strokeWidth="3" strokeDasharray="5 1 2 1 3 1 1 1" />
  </g>
);
const Valve = ({ x, y, c }: { x: number; y: number; c: string }) => <g stroke={c}><rect x={x - 3} y={y - 2.5} width="6" height="5" /><path d={`M${x - 4} ${y - 4}v8M${x + 4} ${y - 4}v8`} /></g>;
const Check2 = ({ x, y, c }: { x: number; y: number; c: string }) => <path stroke={c} d={`M${x - 6} ${y - 3}v6M${x - 4} ${y - 3}v6l9-5v5M${x + 7} ${y - 3}v6`} />;

function Relief({ x, y }: { x: number; y: number }) {
  return (
    <g>
      <Valve x={x - 30} y={y} c={T} /><Valve x={x - 21} y={y} c={R} /><circle cx={x - 21} cy={y} r="3" stroke={R} strokeWidth="1.500" />
      <path d={`M${x - 17} ${y + 2}l12-4v4`} stroke={R} />
      <path d={`M${x - 4} ${y - 3}l8 6v-6l-8 6zM${x - 3} ${y + 4}h6M${x} ${y}v-8M${x} ${y - 17.5}h5.5v12M${x} ${y}l8-4`} stroke={G} />
      <rect x={x - 3} y={y - 13} width="5" height="5" stroke={G} /><Dot x={x + 12} y={y - 5} />
      <Note x={x + 14} y={y - 17} w={18} c={G} />
      <Valve x={x} y={y + 11} c={R} /><circle cx={x} cy={y + 11} r="3" stroke={R} strokeWidth="1.500" /><Valve x={x} y={y + 20} c={T} /><Note x={x + 5} y={y + 10} w={4} c={R} rows={1} />
    </g>
  );
}

function Drawing() {
  return (
    <svg viewBox="0 173 1592 697" preserveAspectRatio="xMinYMin slice" className="absolute inset-0 h-full w-full" fill="none" shapeRendering="crispEdges" aria-label="Flow diagram">
      <g stroke={T}>
        <path d="M930 270.500h87M1030 270.500h86M967.500 271v218M967.500 494v89.500h28M1005.500 271v218M1005.500 494v61.500h32M1039.500 271v102.500h77M1057.500 271v81.500h59M1077.500 271v60.500h6M1107 331.500h10" />
        <path d="M1028.500 606v17.500h43V579M1049.500 623.500v20M964 489.500h7M964 494.500h7M1002 489.500h7M1002 494.500h7M1017.500 268v6M1029.500 268v6M1083.500 328v6M1106.500 328v6M980 578.500h6M980 580.500h6M1016 549.500h6M1016 551.500h6M983.500 581v2M1019.500 552v3" />
        {[967, 1006, 1039, 1057, 1077].map((x) => <path key={x} d={`M${x - 2} 273.500h5M${x - 1} 271.500h3`} strokeWidth="2" />)}
        <path d="M1042 291v7M1061 291v7M1081 291v7M971 445v8M1009.500 445v8" strokeWidth="3" strokeDasharray="2 .7" />
      </g>
      <Check2 x={1023} y={271} c={R} /><Note x={1020} y={275} w={5} c={R} rows={1} />
      <Valve x={1090} y={331} c={R} /><path d="M1095 333l9-4v4M1088 325h4" stroke={R} strokeWidth="1.500" />
      <Tag x={1115} y={270} flip /><Tag x={1115} y={331} lead={7} /><Tag x={1115} y={352} lead={21} /><Tag x={1115} y={373} lead={21} />
      <Tag x={1115} y={492} lead={5} /><Tag x={1115} y={643} flip lead={5} /><Tag x={1115} y={666} lead={5} /><Note x={1118} y={674} w={18} c={Y} rows={1} />
      <g stroke={C}>
        <path d="M930 425.500h13.500V490M926.500 563v12M926.500 577v66.500H1116M923 576.500h7M923 588.500h7M923 590.500h7M939 493l2-3h5l2 3z" />
        <path d="M930 492h158M1095 492h21" strokeWidth="2" /><path d="M1088 490l3-2h4v8h-4l-3-2z" />
        <path d="M1048 488h8M1080 642h8" strokeWidth="3" strokeDasharray="1 1 3 .5" />
      </g>
      <path d="M1095.500 450v55" stroke={Y} strokeDasharray="6 2 1 2" /><path d="M1072 450h48" stroke={Y} /><path d="M1071 450l5-2v4zM1120 450l-5-2v4z" fill={Y} />
      <path d="M1066 446h26M1098 446h22" stroke={Y} strokeWidth="3" strokeDasharray="3 1 1 1 4 1" />
      <path d="M983.500 530v53M1019.500 525v24M1024 519.500h12" stroke={G} strokeDasharray="5 1" />
      <Box x={983} y={526} /><Box x={983} y={547} /><Dot x={983} y={565} /><Box x={1019} y={520} /><Box x={1041} y={520} /><Dot x={1019} y={537} />
      <Relief x={1028} y={583} /><Relief x={1071} y={555} />
      <Note x={1026} y={547} w={17} c={T} /><Note x={984} y={590} w={18} c={T} /><Note x={1006} y={604} w={18} c={T} /><Note x={1075} y={582} w={18} c={T} />
      <Note x={975} y={576} w={4} c={T} rows={1} /><Note x={1010} y={548} w={4} c={T} rows={1} />
      <Note x={937} y={315} w={17} c={G} /><Dot x={937} y={327} /><Note x={936} y={358} w={10} c={T} />

      <g stroke={P}><path d="M553.500 563v104" /><path d="M554 667h31M598 667h518" strokeWidth="2" /><path d="M585.500 663v7M587.500 670l8-5M597.500 663v7M550 577.500h7M551 602.500h6" strokeWidth="1.500" /><path d="M810 664h8M555 667h4" strokeWidth="3" /></g>
      <path d="M554 610.500h139.500V563M770.500 563v47.500H927" stroke={R} /><path d="M628 608h6M869 607h6M922 610h4" stroke={R} strokeWidth="3" />
      {[[554, 584], [927, 571]].map(([x, y]) => (
        <g key={x}>
          <path d={`M${x - 5} ${y - .5}h-16M${x - 10} ${y}v4M${x - 13} ${y + 4.5}h6M${x + 2} ${y - 3}l6-6`} stroke={G} />
          <path d={`M${x - 32} ${y - .5}h-12`} stroke={G} strokeDasharray="2 1" /><path d={`M${x - 53} ${y}l4-4 4 4-4 4zM${x - 49} ${y - 1}v3`} stroke={G} />
          <circle cx={x - 26} cy={y} r="4.500" stroke={G} /><path d={`M${x - 28} ${y + 3}v-5l2 3 2-3v5`} stroke={G} />
          <path d={`M${x - 3} ${y - 4}h6l-6 8h6z`} stroke={G} /><Dot x={x + 11} y={y - 11} /><path d={`M${x + 7} ${y - 3}v7`} stroke={Y} strokeWidth="3" strokeDasharray="3 .6" />
        </g>
      ))}
      <path d="M538.500 563v20M527.500 563v7.500h11M911.500 563v8" stroke={G} />
      {[[498, 655], [871, 631]].map(([x, y]) => (
        <g key={x}><path d={`M${x} ${y + .5}h56`} stroke={G} strokeDasharray="5 1" /><Box x={x} y={y} /><Box x={x + 22} y={y} /><Dot x={x + 39} y={y} /><path d={`M${x + 47} ${y - 2}l6 4v-4l-6 4z`} fill={R} stroke={R} /><Note x={x + 47} y={y - 4} w={6} c={Y} rows={1} /></g>
      ))}
      <g stroke={K}><path d="M709.500 563v101M709.500 670v86M755.500 563v101M755.500 670v86M346 756.500h320M677 756.500h79M706 664.500h7M706 669.500h7M752 664.500h7M752 669.500h7M704 739.500h5M737.500 750v6M734 751.500h7M708 747l2-3 2 3z" /><path d="M715.500 753v7h3v-7z" /><path d="M391 753.500h8M713.500 720v6M759.500 720v7M708 754h4M754 754h4" strokeWidth="3" /></g>
      <Check2 x={671} y={757} c={K} />
      {[691, 737].map((x) => <g key={x}><path d={`M${x + .5} 704v35`} stroke={G} strokeDasharray="5 1" /><Box x={x} y={699} /><Box x={x} y={721} /><Dot x={x} y={738} /></g>)}
      <path d="M696 739.500h6M702.500 736v7M737.500 743v6M734 749.500h7" stroke={G} />
      <Note x={701} y={732} w={6} c={Y} rows={1} /><Note x={743} y={746} w={6} c={Y} rows={1} /><Note x={668} y={763} w={7} c={Y} rows={1} /><Note x={707} y={762} w={20} c={Y} />
      <Tag x={319} y={756} w={27} lead={10} />
      <path d="M1387 690h11" stroke={R} strokeWidth="3" strokeDasharray="3 1" />

      <g stroke="#fff">
        <path d="M17.500 802v50.500H68M13.500 847.500h9v9h-9z" />
        <path d="M19 785l6 7 6-7M25.500 792v7M72 838l13 14M85 838l-13 14" shapeRendering="auto" />
      </g>
    </svg>
  );
}

function ViewCube() {
  return (
    <svg className="absolute right-[14px] top-10" width="136" height="178" viewBox="1442 213 136 178" aria-label="View cube">
      <circle cx="1510" cy="278" r="52.500" fill="none" stroke="#464c54" strokeWidth="13" />
      <rect x="1485" y="253" width="50" height="50" fill="#b0b0b0" stroke="#8d8d8d" /><rect x="1494" y="262" width="32" height="32" fill="#a0a8ac" />
      <g fontFamily="Liberation Sans, sans-serif" fontWeight="bold" textAnchor="middle" fill="#b4b6b8">
        <text x="1510" y="231" fontSize="20">N</text><text x="1510" y="341" fontSize="20">S</text><text x="1455" y="286" fontSize="20">W</text><text x="1565" y="286" fontSize="20">E</text>
        <text x="1510" y="283" fontSize="12" fill="#4d5255">TOP</text>
      </g>
      <rect x="1486.500" y="364.500" width="47" height="17" rx="3" fill="#9a9cab" stroke="#8a8c98" />
      <text x="1491" y="377" fontSize="11" fontFamily="Liberation Sans, sans-serif" fill="#4a4c58">WCS</text><path d="M1520 370h8l-4 5z" fill="#b8bac5" stroke="#777" />
    </svg>
  );
}

function NavBar() {
  return (
    <div className="absolute right-[3px] top-[233px] flex h-[214px] w-[33px] flex-col items-center rounded border border-[#444a50] bg-[#5f6467] text-[#33383e] shadow-[0_0_2px_#000]">
      <Ico w={8} h={8} className="mr-0.5 mt-0.5 self-end"><circle cx="4" cy="4" r="4" fill="#3e4348" stroke="none" /><path d="M2 2l4 4M6 2L2 6" stroke="#777" /></Ico>
      <button aria-label="Steering wheel" className="mt-2"><Ico w={24} h={24}><g stroke="#41464c"><path d="M12 1h11v11a11 11 0 1 1-11-11z" /><circle cx="12" cy="12" r="8.500" /><circle cx="12" cy="12" r="5" /></g></Ico></button>
      <Caret className="mt-2" />
      <button aria-label="Pan" className="mt-2.5"><Ico w={24} h={24}><path d="M8 22L2 13c-1-2 1-3 3-1l3 3V4c0-2 2-2 3 0v6V2c0-2 3-2 3 0v8l1-7c0-2 3-1 3 0l-1 8 3-5c1-1 3 0 2 2l-3 10-2 4z" stroke="#41464c" /></Ico></button>
      <button aria-label="Zoom" className="mt-1"><Ico w={24} h={24}><g stroke="#41464c" strokeWidth="1.500"><path d="M1 1l15 15M16 1L1 16M1 5V1h4M12 1h4v4M1 12v4h4" /><circle cx="16" cy="16" r="4.500" fill="#5f6467" /><path d="M19 19l5 5" strokeWidth="3" /></g></Ico></button>
      <Caret className="mt-1" />
      <button aria-label="Orbit" className="mt-1"><Ico w={24} h={24}><g stroke="#41464c"><ellipse cx="12" cy="14" rx="11" ry="5" /><path d="M10 22V6H7l5-5 5 5h-3v16z" fill="#5f6467" /></g></Ico></button>
      <Caret className="mt-1.5" />
      <button aria-label="Show motion" className="mt-2"><Ico w={24} h={24}><path d="M1.500 1.500h5v5h-5zM9.500 1.500h5v5h-5zM17.500 1.500h5v5h-5zM1.500 10.500h16v13h-16z" stroke="#41464c" strokeWidth="1.500" /><path d="M6 13l8 4-8 4z" fill="#41464c" stroke="none" /></Ico></button>
      <Ico w={8} h={8} className="mb-0.5 mr-0.5 mt-auto self-end"><circle cx="4" cy="4" r="4" fill="#3e4348" stroke="none" /><path d="M2 3h4M2 5h4" stroke="#777" /></Ico>
    </div>
  );
}

function CommandLine() {
  return (
    <div className="absolute bottom-0 left-[320px] right-[311px] flex h-[27px] items-center border border-[#666] bg-[#bdbebf]">
      <div className="flex h-full w-[53px] items-center gap-2 bg-linear-to-b from-[#5e5f61] to-[#3e3f41] pl-[3px]">
        <Ico w={5} h={18}><path d="M1 0v18M4 0v18" stroke="#999" strokeDasharray="1 1" /></Ico>
        <button aria-label="Close command line"><Ico w={9} h={9}><path d="M1 1l7 7M8 1L1 8" stroke="#ccc" strokeWidth="1.500" /></Ico></button>
        <button aria-label="Customize"><Ico w={15} h={15}><path d="M6 6l7.500 8" stroke="#ccc" strokeWidth="2.500" /><path d="M5 1.500v3L2.500 5 1.500 3.500C1 6 3 8 5.500 7.500S8.500 3.500 5 1.500z" stroke="#ccc" strokeWidth="1.300" /></Ico></button>
      </div>
      <Ico w={15} h={14} className="ml-1"><rect x=".5" y=".5" width="14" height="13" rx="1" fill="#a9b2c0" stroke="#7b8494" /><path d="M3 4l4 3-4 3M8 10.500h4" stroke="#333" /></Ico>
      <Caret className="ml-1 text-[#555]" />
      <input aria-label="Command" placeholder="Type a command" className="ml-1.5 min-w-0 flex-1 bg-transparent font-['Liberation_Mono',monospace] text-xs italic outline-none placeholder:text-[#6a6a6a]" />
      <Ico w={8} h={5} className="mr-1"><path d="M0 5l4-4 4 4z" fill="#222" stroke="none" /></Ico>
    </div>
  );
}

function Canvas() {
  return (
    <main className="relative flex min-h-0 flex-1 overflow-hidden bg-[#212830]">
      <div className="relative flex-1">
        <Drawing />
        <p className="absolute left-[3px] top-1.5 whitespace-nowrap text-xs text-white">[–][Top][2D]</p>
        <div className="absolute right-2.5 top-2 flex gap-2">
          <button aria-label="Minimize drawing"><Ico w={12} h={13}><path d="M1 10h10" stroke="#fff" strokeWidth="3" /></Ico></button>
          <button aria-label="Restore drawing"><Ico w={12} h={13}><path d="M1.500 5h6v6h-6zM4 4V2h6v6.500H8" stroke="#fff" strokeWidth="2" /></Ico></button>
          <button aria-label="Close drawing"><Ico w={12} h={13}><path d="M2 3l8 8M10 3l-8 8" stroke="#fff" strokeWidth="2.500" /></Ico></button>
        </div>
        <ViewCube />
        <NavBar />
        <CommandLine />
        <svg className="pointer-events-none absolute inset-0 h-full w-full" viewBox="0 173 1592 697" preserveAspectRatio="xMinYMin slice" fill="none" stroke="#fff" shapeRendering="crispEdges" aria-hidden="true">
          <path d="M1199.500 173v512M1199.500 700v170M0 692.500h1192M1207 692.500h385M1192.500 685.500h14v14h-14z" />
        </svg>
      </div>
      <div className="w-2 border-r-2 border-[#17c6e8] bg-linear-to-b from-[#e2f0f8] from-[13%] to-[#bccfe8] to-[13%]" />
    </main>
  );
}

/* ---------- status bar ---------- */

function LayoutTab({ label, active = false }: { label: string; active?: boolean }) {
  return (
    <button className={`h-[18px] rounded-b-lg leading-[15px] ${active ? 'bg-white px-3 text-xs font-bold text-black' : 'bg-[#dedede] px-[11px] text-[11px] text-[#666]'}`}>{label}</button>
  );
}

const Sep = () => <span className="h-6 w-px bg-white" />;
const Person = ({ c, mark }: { c: string; mark?: React.ReactNode }) => <Ico w={18} h={18}><path d="M9 1l2 6 1 4 5 5-3 1-5-5-5 5-3-1 5-5 1-4z" fill={c} stroke="none" />{mark}</Ico>;

function StatusBar() {
  return (
    <footer className="bg-[#1b1c20]">
      <div className="flex h-[27px] bg-[#b2b2b2]">
        <div className="flex items-start gap-0.5 pl-2.5">
          <LayoutTab label="Model" active /><LayoutTab label="Layout1" /><LayoutTab label="Layout2" />
          <button aria-label="New layout" className="ml-0.5 flex h-[17px] w-[22px] items-center justify-center rounded-b-lg bg-[#ececec]"><Ico w={9} h={9}><path d="M4.500 0v9M0 4.500h9" strokeWidth="2" /></Ico></button>
        </div>
        <div className="ml-auto flex w-[618px] items-center justify-between border-t border-white bg-[#e7e7e7] pl-[5px] pr-1.5 text-xs text-black">
          <button>MODEL</button><Sep />
          <Ico><path d="M3.500 0v16M6.500 0v16M9.500 0v16M12.500 0v16M0 3.500h16M0 6.500h16M0 9.500h16M0 12.500h16" strokeWidth=".7" /></Ico>
          <Ico><path d="M1 1.500h14M1 4.500h14M1 7.500h14M1 10.500h14M1 13.500h14" strokeDasharray="1 2" /></Ico><Caret className="ml-1" /><Sep />
          <Ico w={14}><path d="M1.500 1v12.500H14M1.500 9.500h4v4" stroke="#1e88e5" strokeWidth="1.500" /></Ico>
          <Ico><circle cx="8" cy="8" r="6.500" /><path d="M8 2v6h8M11 5l2 3-2 3" /></Ico><Caret />
          <Ico w={18} h={20}><path d="M2 0l14 19M9 0v9M12 8l-8 9" /></Ico><Caret />
          <Ico><path d="M15 14.500H1L15 3M6 8l3 4" stroke="#1e88e5" strokeWidth="1.500" /></Ico>
          <Ico><path d="M3.500 3.500h11v11h-11z" stroke="#1e88e5" strokeWidth="1.500" /><path d="M.500.500h5v5h-5z" fill="#19c819" stroke="#000" /></Ico><Caret /><Sep />
          <Person c="#1e88e5" mark={<circle cx="13" cy="4" r="2.500" stroke="#1e88e5" fill="#dceeff" />} />
          <Person c="#505050" mark={<path d="M15 0l-3 4h3l-3 4" stroke="#444" />} /><Person c="#505050" />
          <button className="flex items-center gap-1">1:1<Caret /></button><Sep />
          <Ico w={14} h={14}><circle cx="7" cy="7" r="4" stroke="#555" strokeWidth="3" /><path d="M7 0v3M7 11v3M0 7h3M11 7h3M2 2l2 2M10 10l2 2M12 2l-2 2M4 10l-2 2" stroke="#555" strokeWidth="2" /></Ico><Caret /><Sep />
          <Ico w={14}><path d="M7 1v14M0 8h14" strokeWidth="1.500" /></Ico><Sep />
          <Ico><path d="M1.500 1.500h5v5h-5zM5 14.500h6l-3-5z" /><circle cx="12" cy="5" r="2.500" /></Ico><Sep />
          <Ico w={18}><circle cx="9" cy="8" r="7.500" fill="#1565c0" stroke="#6fb1f0" /><path d="M5 8l3 3 5-6" stroke="#1c4f8f" /></Ico>
          <Ico><path d="M2 8h9v7H2z" fill="#f5c518" stroke="#8b7211" /><path d="M2 1h7l4 3v6H6z" fill="#5b8fc0" stroke="#333" /><path d="M8 11l3 4 5-6" stroke="#3aa51c" strokeWidth="2" /></Ico>
          <Ico w={20} h={18}><path d="M.500.500h17v16H.500z" fill="#f2f2f2" /><path d="M1 12c4 0 3-9 7-9s4 9 9 9" /><path d="M11 17.500l4.500-8 4.500 8z" fill="#e8702a" stroke="none" /></Ico><Sep />
          <Ico><path d="M.500 1.500h15v12H.500z" /><path d="M9 4h4v4zM7 11H3V7z" fill="#333" stroke="none" /><path d="M12 5L9 8M4 10l3-3" /></Ico>
          <button aria-label="Customization"><Ico><path d="M0 3h16M0 8h16M0 13h16" strokeWidth="1.800" /></Ico></button>
        </div>
      </div>
      <div className="h-[3px] pl-12"><div className="h-px w-[344px] bg-[#e6e6e6]" /></div>
    </footer>
  );
}

export default function App() {
  return (
    <div className="relative flex h-screen flex-col overflow-hidden font-['Open_Sans','Noto_Sans',sans-serif] text-black">
      <Header />
      <Ribbon />
      <div className="flex h-[31px] items-end border-b-4 border-[#f0f0f0] bg-[#b2b2b2] pl-5">
        <button className="h-[22px] rounded-t-lg bg-[#d9d9d9] px-3 text-[11px] text-[#666]">Start</button>
      </div>
      <Canvas />
      <StatusBar />
      <LayerPalette />
      <Callout />
    </div>
  );
}
